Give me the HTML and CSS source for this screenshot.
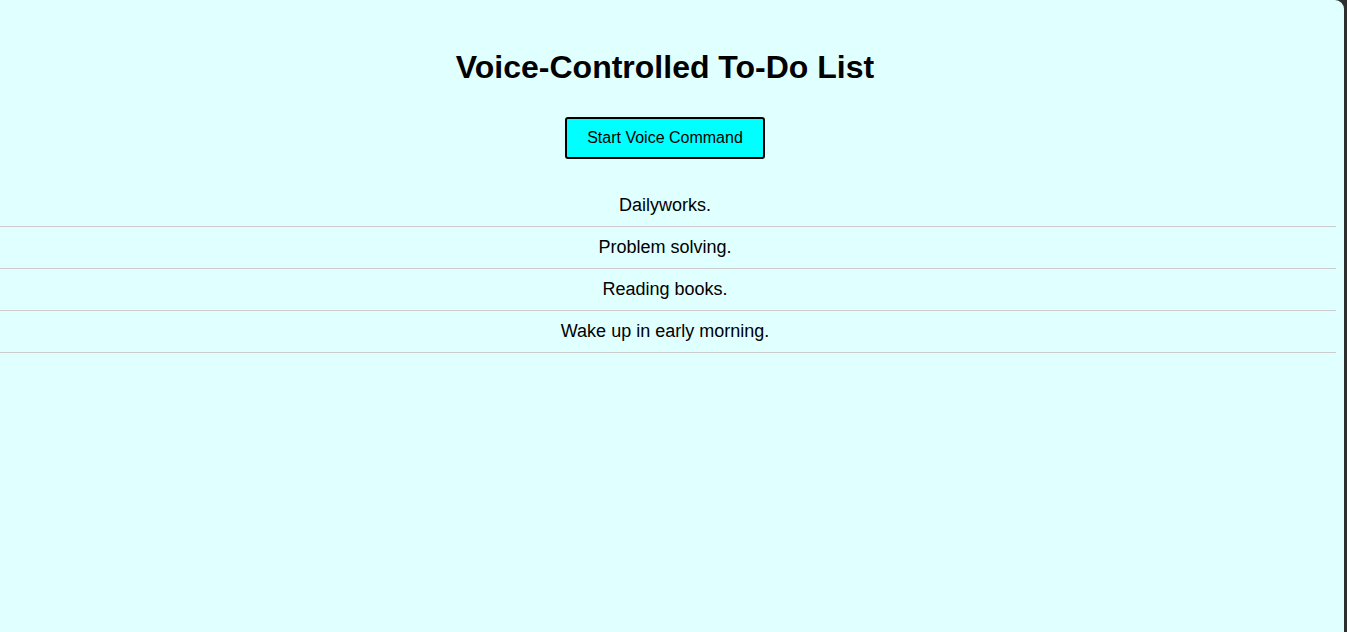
FILE: index.html
```html
<!DOCTYPE html>
<html>
<head>
<meta charset="utf-8">
<title>Voice-Controlled To-Do List</title>
<link rel="stylesheet" href="styles.css">
</head>
<body>
<div class="page">
  <h1 class="title">Voice-Controlled To-Do List</h1>
  <button class="voice-btn">Start Voice Command</button>
  <ul class="todo-list">
    <li class="todo-item">Dailyworks.</li>
    <li class="todo-item">Problem solving.</li>
    <li class="todo-item">Reading books.</li>
    <li class="todo-item">Wake up in early morning.</li>
  </ul>
</div>
</body>
</html>
```

FILE: styles.css
```css
html {
  margin: 0;
  padding: 0;
  background: #2e2e2e;
  height: 100%;
}
body {
  margin: 0;
  padding: 0;
  width: 1344px;
  height: 100%;
  background: #e0ffff;
  border-top-right-radius: 9px;
  font-family: "Liberation Sans", Arial, sans-serif;
  color: #000;
  overflow: hidden;
}
.page {
  width: 1336px;
  display: flex;
  flex-direction: column;
  align-items: center;
}
.title {
  margin: 49px 6px 0 0;
  font-size: 32px;
  line-height: 37px;
  font-weight: bold;
}
.voice-btn {
  margin: 31px 6px 0 0;
  padding: 10px 20px;
  font-family: "Liberation Sans", Arial, sans-serif;
  font-size: 16px;
  line-height: 18px;
  background: #00ffff;
  color: #000;
  border: 2px solid #000;
  border-radius: 3px;
}
.todo-list {
  list-style: none;
  margin: 26px 0 0 0;
  padding: 0;
  width: 100%;
}
.todo-item {
  padding: 10px 6px 10px 0;
  line-height: 21px;
  font-size: 18px;
  text-align: center;
  border-bottom: 1px solid #cccccc;
}
```
